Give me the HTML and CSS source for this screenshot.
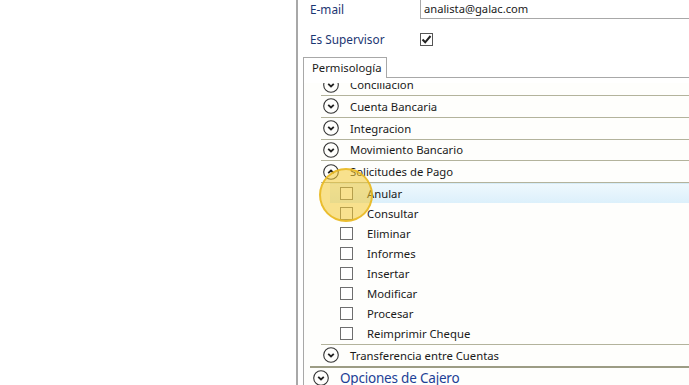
FILE: index.html
```html
<!DOCTYPE html>
<html lang="es">
<head>
    <meta charset="UTF-8">
    <title>Usuario - Permisología</title>
    <link rel="stylesheet" href="styles.css">
</head>
<body>
    <div class="screen">
        <div class="blank"></div>
        <div class="window">
            <div class="form">
                <div class="field field-email">
                    <span class="label">E-mail</span>
                    <div class="input">analista@galac.com</div>
                </div>
                <div class="field field-super">
                    <span class="label">Es Supervisor</span>
                    <span class="check">
                        <svg width="11" height="11" viewBox="0 0 11 11"><path d="M1.5 5.5 L4.2 8.3 L9.5 2" fill="none" stroke="#222" stroke-width="2"/></svg>
                    </span>
                </div>
            </div>

            <div class="tabs">
                <div class="tab-strip">
                    <div class="tab">Permisología</div>
                    <div class="tab-fill"></div>
                </div>
                <div class="tab-panel">
                    <div class="tree">
                        <div class="node child first">
                            <span class="toggle"><svg width="16" height="16" viewBox="0 0 16 16"><circle cx="8" cy="8" r="7.3" fill="none" stroke="#333" stroke-width="1.1"/><path d="M5.2 6.8 L8 9.5 L10.8 6.8" fill="none" stroke="#222" stroke-width="1.8"/></svg></span>
                            <span class="text">Conciliacion</span>
                        </div>
                        <div class="node child">
                            <span class="toggle"><svg width="16" height="16" viewBox="0 0 16 16"><circle cx="8" cy="8" r="7.3" fill="none" stroke="#333" stroke-width="1.1"/><path d="M5.2 6.8 L8 9.5 L10.8 6.8" fill="none" stroke="#222" stroke-width="1.8"/></svg></span>
                            <span class="text">Cuenta Bancaria</span>
                        </div>
                        <div class="node child">
                            <span class="toggle"><svg width="16" height="16" viewBox="0 0 16 16"><circle cx="8" cy="8" r="7.3" fill="none" stroke="#333" stroke-width="1.1"/><path d="M5.2 6.8 L8 9.5 L10.8 6.8" fill="none" stroke="#222" stroke-width="1.8"/></svg></span>
                            <span class="text">Integracion</span>
                        </div>
                        <div class="node child">
                            <span class="toggle"><svg width="16" height="16" viewBox="0 0 16 16"><circle cx="8" cy="8" r="7.3" fill="none" stroke="#333" stroke-width="1.1"/><path d="M5.2 6.8 L8 9.5 L10.8 6.8" fill="none" stroke="#222" stroke-width="1.8"/></svg></span>
                            <span class="text">Movimiento Bancario</span>
                        </div>
                        <div class="node child open">
                            <span class="toggle"><svg width="16" height="16" viewBox="0 0 16 16"><circle cx="8" cy="8" r="7.3" fill="none" stroke="#333" stroke-width="1.1"/><path d="M5.2 9.2 L8 6.5 L10.8 9.2" fill="none" stroke="#222" stroke-width="1.8"/></svg></span>
                            <span class="text">Solicitudes de Pago</span>
                        </div>
                        <div class="leaves">
                            <div class="leaf selected"><span class="box"></span><span class="text">Anular</span></div>
                            <div class="leaf"><span class="box"></span><span class="text">Consultar</span></div>
                            <div class="leaf"><span class="box"></span><span class="text">Eliminar</span></div>
                            <div class="leaf"><span class="box"></span><span class="text">Informes</span></div>
                            <div class="leaf"><span class="box"></span><span class="text">Insertar</span></div>
                            <div class="leaf"><span class="box"></span><span class="text">Modificar</span></div>
                            <div class="leaf"><span class="box"></span><span class="text">Procesar</span></div>
                            <div class="leaf"><span class="box"></span><span class="text">Reimprimir Cheque</span></div>
                        </div>
                        <div class="node child last">
                            <span class="toggle"><svg width="16" height="16" viewBox="0 0 16 16"><circle cx="8" cy="8" r="7.3" fill="none" stroke="#333" stroke-width="1.1"/><path d="M5.2 6.8 L8 9.5 L10.8 6.8" fill="none" stroke="#222" stroke-width="1.8"/></svg></span>
                            <span class="text">Transferencia entre Cuentas</span>
                        </div>
                        <div class="node group">
                            <span class="toggle"><svg width="16" height="16" viewBox="0 0 16 16"><circle cx="8" cy="8" r="7.3" fill="none" stroke="#333" stroke-width="1.1"/><path d="M5.2 6.8 L8 9.5 L10.8 6.8" fill="none" stroke="#222" stroke-width="1.8"/></svg></span>
                            <span class="text">Opciones de Cajero</span>
                        </div>
                    </div>
                </div>
            </div>

            <div class="click-ring"></div>
        </div>
    </div>
</body>
</html>
```

FILE: styles.css
```css
:root {
    --label-color: #1b3672;
    --border-color: #a8a8a8;
    --row-line: #b3b39c;
    --group-line: #9c9c84;
}

body {
    margin: 0;
    padding: 0;
    background: #fff;
    font-family: 'Noto Sans', 'Open Sans', sans-serif;
    font-size: 11.3px;
    color: #1a1a1a;
    overflow: hidden;
}

.screen {
    display: flex;
    height: 385px;
    overflow: hidden;
}

.blank {
    width: 296px;
    flex-shrink: 0;
}

.window {
    position: relative;
    flex: 1;
    border-left: 2px solid var(--border-color);
    background: #fff;
}

.form {
    padding-left: 12px;
}

.field {
    display: flex;
    align-items: center;
}

.label {
    width: 110px;
    flex-shrink: 0;
    color: var(--label-color);
    font-size: 11.8px;
}

.field-email {
    margin-top: -5px;
    height: 24px;
}

.field-email .label {
    padding-top: 4px;
}

.input {
    flex: 1;
    height: 23px;
    border: 1px solid var(--border-color);
    border-right: none;
    padding-left: 3px;
    padding-top: 3px;
    line-height: 18px;
    font-size: 11.2px;
    box-sizing: border-box;
}

.field-super {
    margin-top: 10px;
    height: 20px;
}

.check {
    width: 13px;
    height: 13px;
    border: 1px solid #555;
    box-sizing: border-box;
    display: flex;
    align-items: center;
    justify-content: center;
}

.tabs {
    margin-top: 8px;
    margin-left: 5px;
}

.tab-strip {
    display: flex;
    height: 21px;
}

.tab {
    width: 84px;
    flex-shrink: 0;
    border: 1px solid var(--border-color);
    border-bottom: none;
    box-sizing: border-box;
    padding-left: 8px;
    line-height: 19px;
    background: #fff;
    white-space: nowrap;
}

.tab-fill {
    flex: 1;
    border-bottom: 1px solid var(--border-color);
}

.tab-panel {
    border-left: 1px solid var(--border-color);
    padding-top: 5px;
    background: #fff;
}

.tree {
    height: 302px;
    overflow: hidden;
    background: #fefefc;
}

.node {
    display: flex;
    align-items: center;
    height: 20.75px;
    border-bottom: 1px solid var(--row-line);
}

.node.child {
    margin-left: 17px;
    padding-left: 2px;
}

.node.first {
    margin-top: -8.75px;
}

.node.last {
    border-bottom: none;
}

.toggle {
    width: 16px;
    height: 16px;
    display: flex;
    margin-right: 11px;
}

.node .text {
    white-space: nowrap;
}

.leaves {
    margin-left: 17px;
    border-bottom: 1px solid var(--row-line);
}

.leaf {
    display: flex;
    align-items: center;
    height: 20.1px;
    margin-left: 9px;
    padding-left: 10px;
}

.leaf.selected {
    background: linear-gradient(#eef8fd, #dcf0fb);
    border-top: 1px solid #d6ecf7;
    box-sizing: border-box;
}

.box {
    width: 13px;
    height: 13px;
    border: 1px solid #6e6e6e;
    box-sizing: border-box;
    background: #fff;
    margin-right: 14px;
}

.node.group {
    margin-left: 6px;
    padding-left: 3px;
    border-top: 2px solid var(--group-line);
    border-bottom: none;
}

.node.group .text {
    color: #1d3f96;
    font-size: 13.5px;
    letter-spacing: -0.2px;
}

.click-ring {
    position: absolute;
    left: 21px;
    top: 168px;
    width: 50px;
    height: 50px;
    border-radius: 50%;
    background: rgba(243, 200, 50, 0.55);
    border: 2px solid rgba(232, 183, 30, 0.85);
}
```
